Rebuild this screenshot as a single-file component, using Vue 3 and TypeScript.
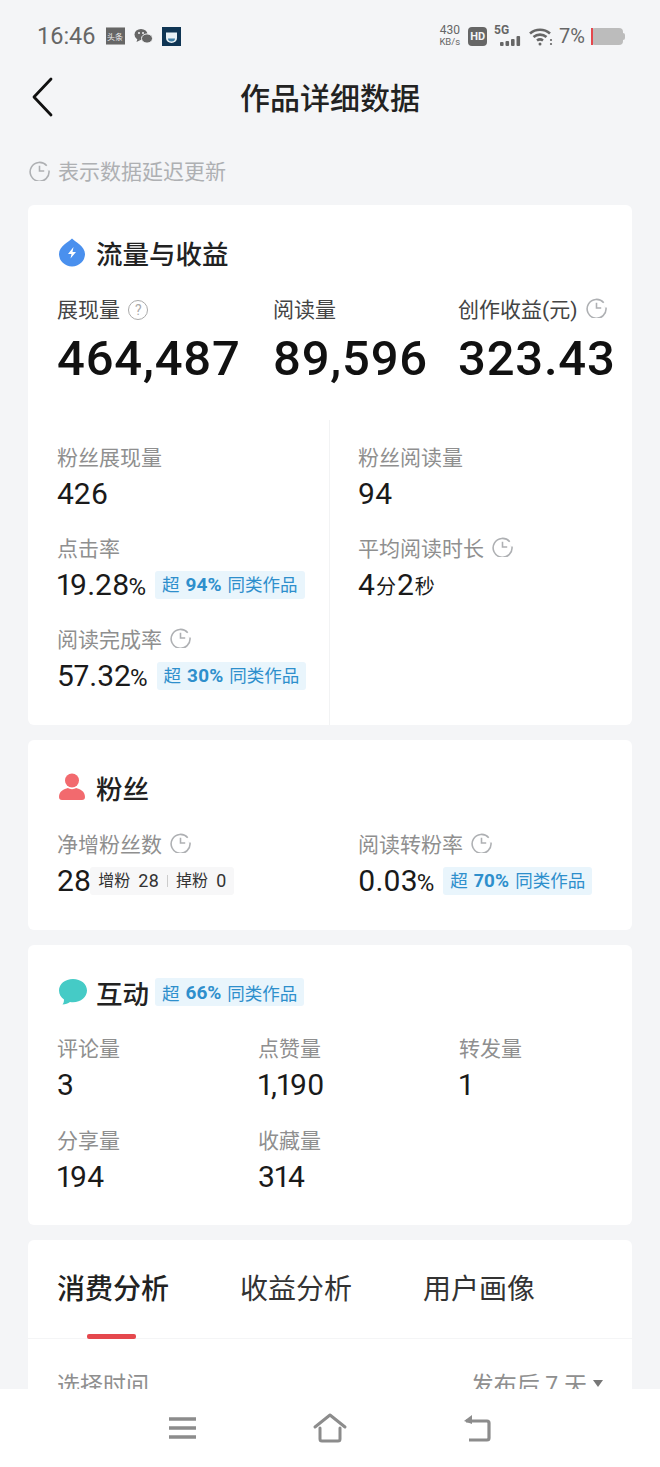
<script setup lang="ts">
const bigStats = [
  { label: '展现量', value: '464,487', icon: 'help' },
  { label: '阅读量', value: '89,596', icon: '' },
  { label: '创作收益(元)', value: '323.43', icon: 'clock' },
]

const interactions = [
  { label: '评论量', value: '3' },
  { label: '点赞量', value: '1,190' },
  { label: '转发量', value: '1' },
  { label: '分享量', value: '194' },
  { label: '收藏量', value: '314' },
]

const tabs = ['消费分析', '收益分析', '用户画像']
</script>

<template>
  <div class="screen">
    <div class="status-bar">
      <div class="status-left">
        <span class="time">16:46</span>
        <span class="toutiao"><span>头条</span></span>
        <svg class="wechat" width="19" height="17" viewBox="0 0 19 17">
          <ellipse cx="7" cy="6.500" rx="6.500" ry="5.500" fill="#666" />
          <path d="M3.500 10.500 2.500 14l4-2z" fill="#666" />
          <ellipse cx="13" cy="10.500" rx="5.500" ry="4.600" fill="#666" stroke="#f4f5f7" stroke-width="1" />
          <circle cx="5" cy="5" r="1" fill="#f4f5f7" />
          <circle cx="9" cy="5" r="1" fill="#f4f5f7" />
        </svg>
        <svg width="19" height="19" viewBox="0 0 19 19">
          <rect width="19" height="19" fill="#0f3554" />
          <path d="M4 5.500h11v5.500a5.500 5 0 0 1-11 0z" fill="#e8f1f6" />
          <path d="M6 11.500h7a3.500 3 0 0 1-7 0z" fill="#3f7fa6" />
        </svg>
      </div>
      <div class="status-right">
        <span class="speed"><span>430</span><span class="speed-unit">KB/s</span></span>
        <span class="hd">HD</span>
        <span class="signal">
          <span class="five-g">5G</span>
          <svg width="21" height="10" viewBox="0 0 21 10">
            <rect x="0" y="6" width="3.600" height="4" rx="1" fill="#666" />
            <rect x="5.500" y="5" width="3.600" height="5" rx="1" fill="#666" />
            <rect x="11" y="3" width="3.600" height="7" rx="1" fill="#666" />
            <rect x="16.500" y="0" width="3.600" height="10" rx="1" fill="#666" />
          </svg>
        </span>
        <svg class="wifi" width="24" height="19" viewBox="0 0 24 19" fill="none" stroke="#666" stroke-width="2.600">
          <path d="M1 6.500a15 15 0 0 1 20 0" />
          <path d="M4.500 10a10 10 0 0 1 13 0" />
          <path d="M8 13.500a5 5 0 0 1 6 0" />
          <circle cx="11" cy="17" r="1.500" fill="#666" stroke="none" />
          <circle cx="22" cy="13" r="1.100" fill="#666" stroke="none" />
          <circle cx="22" cy="17" r="1.100" fill="#666" stroke="none" />
        </svg>
        <span class="battery-pct">7%</span>
        <span class="battery"><span class="battery-level"></span></span>
      </div>
    </div>

    <header class="nav-bar">
      <svg class="back" width="24" height="40" viewBox="0 0 24 40" fill="none" stroke="#111" stroke-width="2.800" stroke-linecap="round" stroke-linejoin="round">
        <path d="M20 2 3 20l17 18" />
      </svg>
      <h1>作品详细数据</h1>
    </header>

    <div class="notice">
      <svg class="clock" viewBox="0 0 20 20" fill="none"><path d="M16.900 5.400A9 9 0 1 0 19 10M10 5.500V10.500H14.500M17.500 9.500h.1" /></svg>
      <span>表示数据延迟更新</span>
    </div>

    <section class="card flow-card">
      <div class="card-title">
        <svg width="28" height="30" viewBox="0 0 28 30">
          <path d="M14 1.500C17 5 27 9 27 17a13 12.500 0 0 1-26 0C1 9 11 5 14 1.500z" fill="#4a90ee" />
          <path d="M15.500 10 10 17h3.500l-1 4.500L18 15h-3.500z" fill="#fff" />
        </svg>
        <h2>流量与收益</h2>
      </div>
      <div class="big-stats">
        <div v-for="s in bigStats" :key="s.label" class="big-stat">
          <div class="label">
            {{ s.label }}
            <svg v-if="s.icon === 'clock'" class="clock" viewBox="0 0 20 20" fill="none"><path d="M16.900 5.400A9 9 0 1 0 19 10M10 5.500V10.500H14.500M17.500 9.500h.1" /></svg>
            <span v-if="s.icon === 'help'" class="help">?</span>
          </div>
          <div class="big-value">{{ s.value }}</div>
        </div>
      </div>
      <div class="split">
        <div class="split-col split-left">
          <div class="stat">
            <div class="label">粉丝展现量</div>
            <div class="value">426</div>
          </div>
          <div class="stat">
            <div class="label">点击率</div>
            <div class="value">19.28<small>%</small><span class="tag">超 <b>94%</b> 同类作品</span></div>
          </div>
          <div class="stat">
            <div class="label">阅读完成率 <svg class="clock" viewBox="0 0 20 20" fill="none"><path d="M16.900 5.400A9 9 0 1 0 19 10M10 5.500V10.500H14.500M17.500 9.500h.1" /></svg></div>
            <div class="value">57.32<small>%</small><span class="tag">超 <b>30%</b> 同类作品</span></div>
          </div>
        </div>
        <div class="split-col split-right">
          <div class="stat">
            <div class="label">粉丝阅读量</div>
            <div class="value">94</div>
          </div>
          <div class="stat">
            <div class="label">平均阅读时长 <svg class="clock" viewBox="0 0 20 20" fill="none"><path d="M16.900 5.400A9 9 0 1 0 19 10M10 5.500V10.500H14.500M17.500 9.500h.1" /></svg></div>
            <div class="value">4<small class="unit">分</small>2<small class="unit">秒</small></div>
          </div>
        </div>
      </div>
    </section>

    <section class="card fans-card">
      <div class="card-title">
        <svg width="28" height="30" viewBox="0 0 28 30" fill="#f26a6e">
          <circle cx="14" cy="8.500" r="7" />
          <path d="M1 25c0-6 5-8 9-9 2 1.500 6 1.500 8 0 4 1 9 3 9 9 0 2-1 3-3 3H4c-2 0-3-1-3-3z" />
        </svg>
        <h2>粉丝</h2>
      </div>
      <div class="fans-row">
        <div class="stat">
          <div class="label">净增粉丝数 <svg class="clock" viewBox="0 0 20 20" fill="none"><path d="M16.900 5.400A9 9 0 1 0 19 10M10 5.500V10.500H14.500M17.500 9.500h.1" /></svg></div>
          <div class="value">28<span class="delta">增粉 <i>28</i><span class="sep"></span>掉粉 <i>0</i></span></div>
        </div>
        <div class="stat">
          <div class="label">阅读转粉率 <svg class="clock" viewBox="0 0 20 20" fill="none"><path d="M16.900 5.400A9 9 0 1 0 19 10M10 5.500V10.500H14.500M17.500 9.500h.1" /></svg></div>
          <div class="value">0.03<small>%</small><span class="tag">超 <b>70%</b> 同类作品</span></div>
        </div>
      </div>
    </section>

    <section class="card interact-card">
      <div class="card-title">
        <svg width="30" height="28" viewBox="0 0 30 28">
          <path d="M15 1C7 1 1 6 1 12.500c0 4 2 7 5 9 0 2-.5 4-1.500 5 3 0 5.500-1 7.500-2.500 1 .2 2 .3 3 .3 8 0 14-5.300 14-11.800S23 1 15 1z" fill="#45cbc6" />
        </svg>
        <h2>互动</h2>
        <span class="tag">超 <b>66%</b> 同类作品</span>
      </div>
      <div class="interact-grid">
        <div v-for="s in interactions" :key="s.label" class="stat">
          <div class="label">{{ s.label }}</div>
          <div class="value">{{ s.value }}</div>
        </div>
      </div>
    </section>

    <section class="card tabs-card">
      <div class="tabs">
        <div v-for="(t, i) in tabs" :key="t" class="tab" :class="{ active: i === 0 }">{{ t }}</div>
      </div>
      <div class="time-row">
        <span>选择时间</span>
        <span class="time-pick">发布后 7 天 <em></em></span>
      </div>
    </section>

    <nav class="sys-nav">
      <svg width="30" height="24" viewBox="0 0 30 24" fill="none" stroke="#8c8c8c" stroke-width="3.500">
        <path d="M1 3h27M1 12h27M1 21h27" />
      </svg>
      <svg width="36" height="30" viewBox="0 0 36 30" fill="none" stroke="#8c8c8c" stroke-width="3" stroke-linejoin="round" stroke-linecap="round">
        <path d="M3 14 18 2l15 12M8 15v11a2 2 0 0 0 2 2h16a2 2 0 0 0 2-2V15" />
      </svg>
      <svg width="30" height="28" viewBox="0 0 30 28" fill="none" stroke="#8c8c8c" stroke-width="3.200" stroke-linejoin="round">
        <path d="M4 7h21a2 2 0 0 1 2 2v15a2 2 0 0 1-2 2H7" />
        <path d="M10 1 2 7l8 3z" fill="#8c8c8c" stroke="none" />
      </svg>
    </nav>
  </div>
</template>

<style>
html,
body {
  margin: 0;
  background: #f4f5f7;
}
</style>

<style scoped>
.screen {
  position: relative;
  width: 660px;
  height: 1467px;
  overflow: hidden;
  background: #f4f5f7;
  color: #1a1a1a;
  font-family: Roboto, "Noto Sans CJK SC", sans-serif;
}

.status-bar {
  height: 72px;
  padding: 0 36px 0 37px;
  box-sizing: border-box;
  display: flex;
  justify-content: space-between;
  align-items: center;
}

.status-left,
.status-right {
  display: flex;
  align-items: center;
}

.time {
  font-size: 23.500px;
  color: #666;
  margin-right: 10px;
}

.toutiao {
  width: 19px;
  height: 18px;
  background: #666;
  border-top: 1px solid #aaa;
  border-bottom: 1px solid #aaa;
  box-sizing: border-box;
  display: flex;
  align-items: center;
  justify-content: center;
  margin-right: 9px;
  overflow: hidden;
}

.toutiao span {
  color: #eee;
  font-size: 8px;
  white-space: nowrap;
}

.wechat {
  margin-right: 9px;
}

.speed {
  display: flex;
  flex-direction: column;
  align-items: center;
  font-size: 12px;
  color: #666;
  margin-right: 8px;
}

.speed span {
  height: 11px;
  line-height: 11px;
}

.speed-unit {
  font-size: 9.500px;
}

.hd {
  width: 19px;
  height: 19px;
  border-radius: 4px;
  background: #666;
  color: #f4f5f7;
  font-size: 11px;
  font-weight: 700;
  text-align: center;
  line-height: 19px;
  margin-right: 7px;
}

.signal {
  position: relative;
  width: 27px;
  height: 20px;
  display: flex;
  align-items: flex-end;
  justify-content: flex-end;
  margin-right: 8px;
}

.five-g {
  position: absolute;
  left: 0;
  top: -2px;
  font-size: 12px;
  line-height: 12px;
  font-weight: 700;
  color: #666;
}

.wifi {
  margin-right: 6px;
}

.battery-pct {
  font-size: 20px;
  color: #666;
  margin-right: 6px;
}

.battery {
  position: relative;
  width: 32px;
  height: 17px;
  border-radius: 4px;
  background: #bcbcbc;
  display: block;
  margin-right: 1px;
}

.battery::after {
  content: "";
  position: absolute;
  right: -2px;
  top: 5px;
  width: 2px;
  height: 7px;
  border-radius: 0 2px 2px 0;
  background: #bcbcbc;
}

.battery-level {
  display: block;
  width: 2px;
  height: 100%;
  background: #e4484d;
}

.nav-bar {
  position: relative;
  height: 52px;
  margin-top: -2px;
  display: flex;
  align-items: center;
  justify-content: center;
}

.nav-bar h1 {
  margin: 0;
  font-size: 30px;
  font-weight: 500;
  color: #222;
}

.back {
  position: absolute;
  left: 31px;
  top: 7px;
}

.notice {
  height: 48px;
  margin-top: 24px;
  padding-left: 29px;
  display: flex;
  align-items: center;
  gap: 8px;
  font-size: 21px;
  color: #aeb0b3;
}

.clock {
  width: 21px;
  height: 21px;
  stroke: #aeb0b3;
  stroke-width: 1.500;
  vertical-align: -1px;
  margin-left: 3px;
  flex: none;
}

.notice .clock {
  margin-left: 0;
}

.card {
  margin: 11px 28px 15px;
  background: #fff;
  border-radius: 6px;
  box-sizing: border-box;
}

.card + .card {
  margin-top: 0;
}

.flow-card {
  height: 520px;
}

.fans-card {
  height: 190px;
}

.interact-card {
  height: 280px;
}

.tabs-card {
  height: 240px;
}

.card-title {
  display: flex;
  align-items: center;
  height: 30px;
  padding: 32px 0 0 30px;
  gap: 10px;
}

.interact-card .card-title {
  gap: 8px;
}

.card-title h2 {
  margin: 0;
  font-size: 26.500px;
  font-weight: 500;
  color: #222;
}

.card-title .tag {
  margin-left: -2px;
}

.big-stats {
  display: grid;
  grid-template-columns: 216px 185px auto;
  padding: 29px 0 0 29px;
}

.label {
  font-size: 21px;
  line-height: 28px;
  color: #8f8f8f;
  white-space: nowrap;
}

.big-stat .label {
  color: #444;
}

.help {
  display: inline-block;
  width: 18px;
  height: 18px;
  margin-left: 3px;
  border: 1.500px solid #aaa;
  border-radius: 50%;
  font-size: 14px;
  line-height: 18px;
  text-align: center;
  color: #aaa;
  vertical-align: 2px;
}

.big-value {
  font-size: 49px;
  font-weight: 500;
  letter-spacing: 0.8px;
  line-height: 56px;
  margin-top: 7px;
  color: #111;
  white-space: nowrap;
}

.split {
  display: flex;
  margin-top: 33px;
}

.split-col {
  flex: none;
  box-sizing: border-box;
  height: 305px;
  padding-top: 24px;
  display: flex;
  flex-direction: column;
  gap: 19px;
}

.split-left {
  width: 302px;
  padding-left: 29px;
  border-right: 1px solid #f2f3f4;
}

.split-right {
  padding-left: 28px;
}

.value {
  display: flex;
  align-items: center;
  font-size: 30px;
  font-feature-settings: "pnum";
  line-height: 44px;
  height: 44px;
  color: #1a1a1a;
  white-space: nowrap;
}

.value small {
  font-size: 24px;
  line-height: 22px;
  margin-top: 4px;
  margin-left: -1px;
}

.value small.unit {
  font-size: 20px;
  margin: 4px 1px 0;
}

.tag {
  display: inline-flex;
  align-items: center;
  gap: 6px;
  height: 28px;
  margin-left: 9px;
  padding: 0 7px;
  background: #e9f5fc;
  border-radius: 3px;
  font-size: 17.500px;
  color: #2e8fcc;
  white-space: nowrap;
}

.tag b {
  font-size: 19px;
  font-weight: 700;
}

.fans-row {
  display: flex;
  padding: 29px 0 0 29px;
}

.fans-row .stat:first-child {
  width: 301px;
}

.delta {
  display: inline-flex;
  align-items: center;
  height: 28px;
  margin-left: -1px;
  padding: 0 8px;
  background: #f7f7f8;
  border-radius: 3px;
  font-size: 16px;
  color: #333;
}

.delta i {
  font-style: normal;
  font-size: 18px;
  margin-left: 8px;
}

.sep {
  width: 1px;
  height: 12px;
  margin: 0 8px;
  background: #ccc;
}

.interact-grid {
  display: grid;
  grid-template-columns: repeat(3, 201px);
  row-gap: 20px;
  padding: 28px 0 0 29px;
}

.tabs {
  display: flex;
  gap: 71px;
  height: 98px;
  padding-left: 29px;
  border-bottom: 1px solid #f4f5f6;
}

.tab {
  position: relative;
  font-size: 28px;
  line-height: 100px;
  height: 98px;
  color: #333;
}

.tab.active {
  font-weight: 500;
  color: #222;
}

.tab.active::after {
  content: "";
  position: absolute;
  left: 30px;
  bottom: -1px;
  width: 49px;
  height: 5px;
  border-radius: 2px;
  background: #e5484d;
}

.time-row {
  display: flex;
  justify-content: space-between;
  padding: 27px 29px 0;
  font-size: 23px;
  color: #8f8f8f;
}

.time-pick {
  display: flex;
  align-items: center;
  gap: 6px;
}

.time-pick em {
  width: 0;
  height: 0;
  border-left: 5px solid transparent;
  border-right: 5px solid transparent;
  border-top: 7px solid #777;
}

.sys-nav {
  position: absolute;
  left: 0;
  right: 0;
  bottom: 0;
  height: 78px;
  background: #fff;
  display: flex;
  align-items: center;
  justify-content: center;
  gap: 114px;
}
</style>
